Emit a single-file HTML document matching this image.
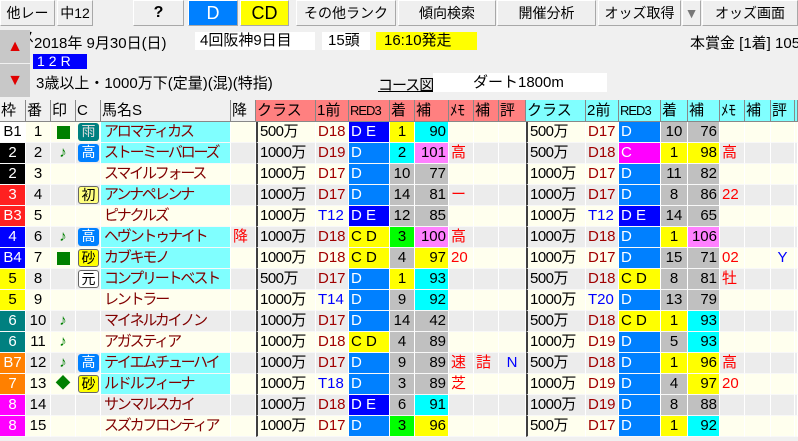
<!DOCTYPE html>
<html><head><meta charset="utf-8"><style>
*{margin:0;padding:0;box-sizing:border-box}
body{width:798px;height:441px;overflow:hidden;background:#f0f0f0;font-family:"Liberation Sans","Noto Sans CJK JP",sans-serif;position:relative;color:#000}
.btn{position:absolute;top:0;height:26px;background:#efefef;border:1px solid #a8a8a8;border-top-color:#fff;border-left-color:#fff;font-size:14px;text-align:center;line-height:24px}
.ab{position:absolute;white-space:nowrap}
table{position:absolute;left:0;top:100px;border-collapse:separate;border-spacing:0;table-layout:fixed;width:798px}
td{height:21px;border-right:1px solid #fff;border-bottom:1px solid #f8f8f8;font-size:15px;line-height:20px;white-space:nowrap;overflow:hidden;padding:0 2px}
tr.h td{height:22px;font-size:15px;background:#f0f0f0;border-right:1px solid #888;border-bottom:1px solid #888;padding:0 1px}
tr.h td.s{background:#ff8080}
tr.h td.q{background:#80ffff}
tr.h td.sm{font-size:13px;letter-spacing:-1px}
tr.c td{background:#ffffee}
tr.g td{background:#ececec}
tr td.cy{background:#80ffff;color:#800000}
td.nm,td.cy{color:#800000;letter-spacing:-2.2px;padding-left:3px}
td.k{border-left:2px solid #404040;letter-spacing:-0.5px}
td.r{text-align:right}
td.ct{text-align:center}
.dr{color:#a00000}.bl{color:#0000ff}.rd{color:#ff0000}
tr td.w1{background:#fff;color:#000;text-align:center}
tr td.w2{background:#000;color:#fff;text-align:center}
tr td.w3{background:#ff2020;color:#fff;text-align:center}
tr td.w4{background:#0000ff;color:#fff;text-align:center}
tr td.w5{background:#ffff00;color:#000;text-align:center}
tr td.w6{background:#008080;color:#fff;text-align:center}
tr td.w7{background:#ff8000;color:#fff;text-align:center}
tr td.w8{background:#ff00ff;color:#fff;text-align:center}
tr td.D{background:#0080ff;color:#fff}
tr td.DE{background:#0000ff;color:#fff}
tr td.CD{background:#ffff00;color:#000}
tr td.C{background:#ff00ff;color:#fff}
tr td.gr{background:#c0c0c0}
tr td.y{background:#ffff00}
tr td.cn{background:#00ffff}
tr td.mg{background:#ff80ff}
tr td.gn{background:#00ff00}
.tag{display:inline-block;width:21px;height:18px;border-radius:3px;font-size:14px;line-height:17px;text-align:center;vertical-align:middle}
.t1{background:#008080;color:#ddd}.t2{background:#0080ff;color:#fff}.t3{background:#ffff80;border:1px solid #666}.t4{background:#ffff00;border:1px solid #666}.t5{background:#fff;border:1px solid #666}
.sq{display:inline-block;width:13px;height:13px;background:#008000;vertical-align:middle}
.gm{color:#008000}
</style></head><body>
<div class="btn" style="left:0;width:55px">他レース</div>
<div class="btn" style="left:57px;width:36px">中12</div>
<div class="btn" style="left:133px;width:51px;font-weight:bold;font-size:16px">?</div>
<div class="btn" style="left:188px;width:50px;background:#0080ff;color:#fff;font-size:18px">D</div>
<div class="btn" style="left:240px;width:49px;background:#ffff00;font-size:18px">CD</div>
<div class="btn" style="left:296px;width:100px">その他ランク</div>
<div class="btn" style="left:398px;width:98px">傾向検索</div>
<div class="btn" style="left:497px;width:99px">開催分析</div>
<div class="btn" style="left:598px;width:83px">オッズ取得</div>
<div class="btn" style="left:682px;width:19px;color:#777">▼</div>
<div class="btn" style="left:702px;width:96px">オッズ画面</div>

<div class="ab" style="left:0;top:30px;width:30px;height:33px;background:#c8c8c8;color:#e00000;font-size:16px;text-align:center;line-height:33px">▲</div>
<div class="ab" style="left:0;top:64px;width:30px;height:33px;background:#c8c8c8;color:#e00000;font-size:16px;text-align:center;line-height:33px">▼</div>
<div class="ab" style="left:34px;top:32px;font-size:15px">2018年 9月30日(日)</div>
<div class="ab" style="left:195px;top:32px;width:120px;height:18px;background:#fff;font-size:15px;line-height:18px;padding-left:5px">4回阪神9日目</div>
<div class="ab" style="left:322px;top:32px;width:48px;height:18px;background:#fff;font-size:15px;line-height:18px;padding-left:6px">15頭</div>
<div class="ab" style="left:376px;top:32px;width:101px;height:18px;background:#ffff00;font-size:15px;line-height:18px;padding-left:8px">16:10発走</div>
<div class="ab" style="left:690px;top:32px;font-size:15px">本賞金 [1着] 1050</div>
<div class="ab" style="left:33px;top:54px;width:54px;height:15px;background:#0000ff;color:#fff;font-size:14px;line-height:15px;letter-spacing:4px;padding-left:4px">12R</div>
<div class="ab" style="left:36px;top:72px;font-size:15px">3歳以上・1000万下(定量)(混)(特指)</div>
<div class="ab" style="left:378px;top:74px;font-size:15px;text-decoration:underline;letter-spacing:-1px">コース図</div>
<div class="ab" style="left:433px;top:73px;width:174px;height:19px;background:#fff;font-size:15px;line-height:19px;padding-left:40px">ダート1800m</div>

<table>
<colgroup><col style="width:26px"><col style="width:25px"><col style="width:25px"><col style="width:25px"><col style="width:130px"><col style="width:25px"><col style="width:60px"><col style="width:33px"><col style="width:41px"><col style="width:25px"><col style="width:34px"><col style="width:25px"><col style="width:25px"><col style="width:27px"><col style="width:60px"><col style="width:33px"><col style="width:42px"><col style="width:27px"><col style="width:32px"><col style="width:25px"><col style="width:26px"><col style="width:24px"><col></colgroup>
<tr class="h"><td>枠</td><td>番</td><td>印</td><td>C</td><td>馬名S</td><td>降</td><td class="s">クラス</td><td class="s">1前</td><td class="s sm">RED3</td><td class="s">着</td><td class="s">補</td><td class="s">ﾒﾓ</td><td class="s">補</td><td class="s">評</td><td class="q">クラス</td><td class="q">2前</td><td class="q sm">RED3</td><td class="q">着</td><td class="q">補</td><td class="q">ﾒﾓ</td><td class="q">補</td><td class="q">評</td><td class="q"></td></tr>

<tr class="c"><td class="w1">B1</td><td class="ct">1</td><td class="ct"><span class="sq"></span></td><td><span class="tag t1">雨</span></td><td class="cy">アロマティカス</td><td></td><td class="k">500万</td><td class="dr">D18</td><td class="DE">D E</td><td class="y ct">1</td><td class="cn r">90</td><td></td><td></td><td></td><td class="k">500万</td><td class="dr">D17</td><td class="D">D</td><td class="gr ct">10</td><td class="gr r">76</td><td></td><td></td><td></td><td></td></tr>
<tr class="g"><td class="w2">2</td><td class="ct">2</td><td class="ct gm">♪</td><td><span class="tag t2">高</span></td><td class="cy">ストーミーバローズ</td><td></td><td class="k">1000万</td><td class="dr">D19</td><td class="D">D</td><td class="cn ct">2</td><td class="mg r">101</td><td class="rd">高</td><td></td><td></td><td class="k">500万</td><td class="dr">D18</td><td class="C">C</td><td class="y ct">1</td><td class="y r">98</td><td class="rd">高</td><td></td><td></td><td></td></tr>
<tr class="c"><td class="w2">2</td><td class="ct">3</td><td></td><td></td><td class="nm">スマイルフォース</td><td></td><td class="k">1000万</td><td class="dr">D17</td><td class="D">D</td><td class="gr ct">10</td><td class="gr r">77</td><td></td><td></td><td></td><td class="k">1000万</td><td class="dr">D17</td><td class="D">D</td><td class="gr ct">11</td><td class="gr r">82</td><td></td><td></td><td></td><td></td></tr>
<tr class="g"><td class="w3">3</td><td class="ct">4</td><td></td><td><span class="tag t3">初</span></td><td class="cy">アンナペレンナ</td><td></td><td class="k">1000万</td><td class="dr">D17</td><td class="D">D</td><td class="gr ct">14</td><td class="gr r">81</td><td class="rd">ー</td><td></td><td></td><td class="k">1000万</td><td class="dr">D17</td><td class="D">D</td><td class="gr ct">8</td><td class="gr r">86</td><td class="rd">22</td><td></td><td></td><td></td></tr>
<tr class="c"><td class="w3">B3</td><td class="ct">5</td><td></td><td></td><td class="nm">ピナクルズ</td><td></td><td class="k">1000万</td><td class="bl">T12</td><td class="DE">D E</td><td class="gr ct">12</td><td class="gr r">85</td><td></td><td></td><td></td><td class="k">1000万</td><td class="bl">T12</td><td class="DE">D E</td><td class="gr ct">14</td><td class="gr r">65</td><td></td><td></td><td></td><td></td></tr>
<tr class="g"><td class="w4">4</td><td class="ct">6</td><td class="ct gm">♪</td><td><span class="tag t2">高</span></td><td class="cy">ヘヴントゥナイト</td><td class="rd">降</td><td class="k">1000万</td><td class="dr">D18</td><td class="CD">C D</td><td class="gn ct">3</td><td class="mg r">100</td><td class="rd">高</td><td></td><td></td><td class="k">1000万</td><td class="dr">D18</td><td class="D">D</td><td class="y ct">1</td><td class="mg r">106</td><td></td><td></td><td></td><td></td></tr>
<tr class="c"><td class="w4">B4</td><td class="ct">7</td><td class="ct"><span class="sq"></span></td><td><span class="tag t4">砂</span></td><td class="cy">カブキモノ</td><td></td><td class="k">1000万</td><td class="dr">D18</td><td class="CD">C D</td><td class="gr ct">4</td><td class="y r">97</td><td class="rd">20</td><td></td><td></td><td class="k">1000万</td><td class="dr">D17</td><td class="D">D</td><td class="gr ct">15</td><td class="gr r">71</td><td class="rd">02</td><td></td><td class="bl ct">Y</td><td></td></tr>
<tr class="g"><td class="w5">5</td><td class="ct">8</td><td></td><td><span class="tag t5">元</span></td><td class="cy">コンプリートベスト</td><td></td><td class="k">500万</td><td class="dr">D17</td><td class="D">D</td><td class="y ct">1</td><td class="cn r">93</td><td></td><td></td><td></td><td class="k">500万</td><td class="dr">D18</td><td class="CD">C D</td><td class="gr ct">8</td><td class="gr r">81</td><td class="rd">牡</td><td></td><td></td><td></td></tr>
<tr class="c"><td class="w5">5</td><td class="ct">9</td><td></td><td></td><td class="nm">レントラー</td><td></td><td class="k">1000万</td><td class="bl">T14</td><td class="D">D</td><td class="gr ct">9</td><td class="cn r">92</td><td></td><td></td><td></td><td class="k">1000万</td><td class="bl">T20</td><td class="D">D</td><td class="gr ct">13</td><td class="gr r">79</td><td></td><td></td><td></td><td></td></tr>
<tr class="g"><td class="w6">6</td><td class="ct">10</td><td class="ct gm">♪</td><td></td><td class="nm">マイネルカイノン</td><td></td><td class="k">1000万</td><td class="dr">D17</td><td class="D">D</td><td class="gr ct">14</td><td class="gr r">42</td><td></td><td></td><td></td><td class="k">500万</td><td class="dr">D18</td><td class="CD">C D</td><td class="y ct">1</td><td class="cn r">93</td><td></td><td></td><td></td><td></td></tr>
<tr class="c"><td class="w6">6</td><td class="ct">11</td><td class="ct gm">♪</td><td></td><td class="nm">アガスティア</td><td></td><td class="k">1000万</td><td class="dr">D18</td><td class="CD">C D</td><td class="gr ct">4</td><td class="gr r">89</td><td></td><td></td><td></td><td class="k">1000万</td><td class="dr">D19</td><td class="D">D</td><td class="gr ct">5</td><td class="cn r">93</td><td></td><td></td><td></td><td></td></tr>
<tr class="g"><td class="w7">B7</td><td class="ct">12</td><td class="ct gm">♪</td><td><span class="tag t2">高</span></td><td class="cy">テイエムチューハイ</td><td></td><td class="k">1000万</td><td class="dr">D17</td><td class="D">D</td><td class="gr ct">9</td><td class="gr r">89</td><td class="rd">速</td><td class="rd">詰</td><td class="bl ct">N</td><td class="k">500万</td><td class="dr">D18</td><td class="D">D</td><td class="y ct">1</td><td class="y r">96</td><td class="rd">高</td><td></td><td></td><td></td></tr>
<tr class="c"><td class="w7">7</td><td class="ct">13</td><td class="ct gm">◆</td><td><span class="tag t4">砂</span></td><td class="cy">ルドルフィーナ</td><td></td><td class="k">1000万</td><td class="bl">T18</td><td class="D">D</td><td class="gr ct">3</td><td class="gr r">89</td><td class="rd">芝</td><td></td><td></td><td class="k">1000万</td><td class="dr">D19</td><td class="D">D</td><td class="gr ct">4</td><td class="y r">97</td><td class="rd">20</td><td></td><td></td><td></td></tr>
<tr class="g"><td class="w8">8</td><td class="ct">14</td><td></td><td></td><td class="nm">サンマルスカイ</td><td></td><td class="k">1000万</td><td class="dr">D18</td><td class="DE">D E</td><td class="gr ct">6</td><td class="cn r">91</td><td></td><td></td><td></td><td class="k">1000万</td><td class="dr">D19</td><td class="D">D</td><td class="gr ct">8</td><td class="gr r">88</td><td></td><td></td><td></td><td></td></tr>
<tr class="c"><td class="w8">8</td><td class="ct">15</td><td></td><td></td><td class="nm">スズカフロンティア</td><td></td><td class="k">1000万</td><td class="dr">D17</td><td class="D">D</td><td class="gn ct">3</td><td class="y r">96</td><td></td><td></td><td></td><td class="k">500万</td><td class="dr">D17</td><td class="D">D</td><td class="y ct">1</td><td class="cn r">92</td><td></td><td></td><td></td><td></td></tr>
</table>
</body></html>
